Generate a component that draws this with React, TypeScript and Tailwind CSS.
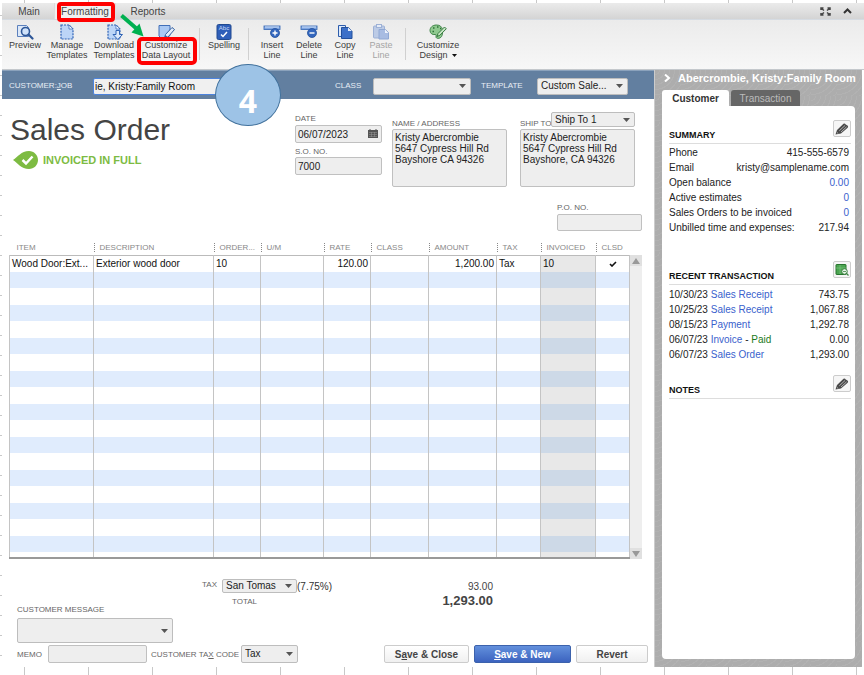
import { useState } from 'react'
import type { ReactNode } from 'react'
import clsx from 'clsx'

const columns = [
  { name: 'ITEM', width: 'w-[84px]' },
  { name: 'DESCRIPTION', width: '' },
  { name: 'ORDER...', width: 'w-[47px]' },
  { name: 'U/M', width: 'w-[63px]' },
  { name: 'RATE', width: 'w-[47px]' },
  { name: 'CLASS', width: 'w-[58px]' },
  { name: 'AMOUNT', width: 'w-[68px]' },
  { name: 'TAX', width: 'w-[44px]' },
  { name: 'INVOICED', width: 'w-[55px]' },
  { name: 'CLSD', width: 'w-[34px]' },
]

const firstLine = ['Wood Door:Ext...', 'Exterior wood door', '10', '', '120.00', '', '1,200.00', 'Tax', '10', '✓']

const summary = [
  { label: 'Phone', value: '415-555-6579' },
  { label: 'Email', value: 'kristy@samplename.com' },
  { label: 'Open balance', value: '0.00', link: true },
  { label: 'Active estimates', value: '0', link: true },
  { label: 'Sales Orders to be invoiced', value: '0', link: true },
  { label: 'Unbilled time and expenses:', value: '217.94' },
]

const transactions = [
  { date: '10/30/23', type: 'Sales Receipt', amount: '743.75' },
  { date: '10/25/23', type: 'Sales Receipt', amount: '1,067.88' },
  { date: '08/15/23', type: 'Payment', amount: '1,292.78' },
  { date: '06/07/23', type: 'Invoice', amount: '0.00', paid: true },
  { date: '06/07/23', type: 'Sales Order', amount: '1,293.00' },
]

const labelClass = 'text-[8px] leading-[9px] text-[#666] whitespace-nowrap'
const fieldClass = 'block w-full rounded-[2px] border border-[#c0c0c0] bg-[#eee] px-0.5 text-[10px] text-[#222]'

function Dropdown({ id, value, className, label }: { id: string; value: string; className: string; label?: string }) {
  return (
    <div className={clsx('relative shrink-0', className)}>
      <select
        id={id}
        aria-label={label}
        className="block h-full w-full appearance-none rounded-[2px] border border-[#bdbdbd] bg-[#eee] pl-[3px] text-[10px] leading-3 text-[#222]"
      >
        <option>{value}</option>
      </select>
      <svg className="pointer-events-none absolute inset-y-0 right-[5px] my-auto" width="7" height="4" viewBox="0 0 7 4">
        <path d="M0 0h7L3.5 4z" fill="#555" />
      </svg>
    </div>
  )
}

function PreviewIcon() {
  return (
    <svg width="18" height="16" viewBox="0 0 18 16">
      <path d="M1.5 1.5h9l2 2v9h-11z" fill="#dce8f8" stroke="#5b80bd" />
      <circle cx="9.5" cy="7.5" r="4" fill="#cfe2fa" stroke="#2d5697" strokeWidth="1.6" />
      <path d="M12.5 10.5l4 4" stroke="#2d5697" strokeWidth="2.2" strokeLinecap="round" />
    </svg>
  )
}

function TemplateIcon({ download }: { download?: boolean }) {
  return (
    <svg width="18" height="16" viewBox="0 0 18 16">
      <path d="M3 1h8l4 4v10H3z" fill="#bcd5f7" />
      <path d="M3 1h8l4 4v10H3z" fill="none" stroke="#2f63b5" strokeWidth="1.2" strokeDasharray="2 1" />
      <path d="M11 1v4h4z" fill="#f3f8ff" stroke="#2f63b5" strokeWidth=".7" />
      {download && <path d="M11 6.5h3.500v4h3l-4.700 5-4.800-5h3z" fill="#dbe8fb" stroke="#2f63b5" />}
    </svg>
  )
}

function LayoutIcon() {
  return (
    <svg width="18" height="16" viewBox="0 0 18 16">
      <path d="M2 1.5h11v10l-3 2.500H4l-2-2z" fill="#a9c8f3" stroke="#416fb8" />
      <path d="M7.500 14l1-3.500 6.500-7 2.500 2-6.500 7.500z" fill="#e3edfa" stroke="#345f9f" />
      <path d="M7.500 14l1-3 2 2z" fill="#345f9f" />
    </svg>
  )
}

function SpellingIcon() {
  return (
    <svg width="16" height="16" viewBox="0 0 16 16">
      <rect x="1" y=".5" width="14" height="15" rx="1.5" fill="#2f5fb9" stroke="#21498f" />
      <text x="8" y="6" fontSize="6" textAnchor="middle" fill="#c9dbf8" fontFamily="Liberation Sans, sans-serif">
        Abc
      </text>
      <path d="M5 10.5l2 2 4-4.500" fill="none" stroke="#fff" strokeWidth="1.5" />
    </svg>
  )
}

function LineIcon({ minus }: { minus?: boolean }) {
  return (
    <svg width="18" height="16" viewBox="0 0 18 16">
      <rect x="1" y="2" width="16" height="3.5" fill="#7fa6e2" stroke="#416fb8" strokeWidth=".9" />
      <path d="M2 3h14" stroke="#dbe8fa" strokeWidth=".9" />
      <circle cx="12" cy="9" r="4.5" fill="#3467be" stroke="#23509c" strokeWidth=".8" />
      <path d={minus ? 'M9.500 9h5' : 'M9.500 9h5M12 6.500v5'} stroke="#fff" strokeWidth="1.4" />
    </svg>
  )
}

function CopyIcon() {
  return (
    <svg width="16" height="16" viewBox="0 0 16 16">
      <path d="M1.5 1.5h7v11h-7z" fill="#dce9fb" stroke="#2c5cac" />
      <path d="M4.500 3.500h7l3.500 3.500v7.500H4.500z" fill="#3c70c8" stroke="#23509c" />
      <path d="M11 3.500v3.500h4z" fill="#e4eefc" />
    </svg>
  )
}

function PasteIcon() {
  return (
    <svg width="18" height="16" viewBox="0 0 18 16">
      <rect x="1.5" y="2" width="11" height="12" rx="1" fill="#bccbe6" stroke="#9db1d6" />
      <rect x="4.5" y=".5" width="5" height="3" fill="#e6ecf7" stroke="#9db1d6" />
      <path d="M7 5.500h6.500l3 3v6.500H7z" fill="#a8bce2" stroke="#90a8d4" />
      <path d="M13 5.500v3.500h3.500z" fill="#eef3fb" />
    </svg>
  )
}

function DesignIcon() {
  return (
    <svg width="18" height="16" viewBox="0 0 18 16">
      <path d="M7.500 1C3.500 1 1 3.500 1 6.500S3.500 11 6 10.500c1.500-.3 1 1.500 1 2.500 0 2 5 2 6-1.500S14.500 1 7.500 1z" fill="#8fc98f" stroke="#3f8448" />
      <path d="M4 4h1.500M8 3h1.500M3.500 7.500H5M11 4.500h1" stroke="#2f7139" strokeWidth="1.5" />
      <path d="M8 12.500l1-3L15.500 3l1.800 1.800-6.500 6.500z" fill="#c6e6c3" stroke="#36793f" />
    </svg>
  )
}

function PencilIcon() {
  return (
    <svg width="14" height="12" viewBox="0 0 14 12">
      <path d="M.5 11.500l1.500-4.500L8.500.8q1.400-.6 2.200.6l1.800 1.200q1.200 1 .2 2.200L6 10.500z" fill="#4a4a4a" />
      <path d="M4.300 7.800l5.700-5.300M6 9l5.600-5.200" stroke="#d8d8d8" strokeWidth=".7" />
      <path d="M2 9.500l1.300 1" stroke="#eee" strokeWidth=".6" />
    </svg>
  )
}

function ReportIcon() {
  return (
    <svg width="14" height="12" viewBox="0 0 14 12">
      <rect x="1" y=".5" width="10" height="10" rx=".5" fill="#4ba551" stroke="#28742f" />
      <path d="M1 4h10M5 1v9" stroke="#84c788" strokeWidth=".6" />
      <circle cx="9.500" cy="7.500" r="2.8" fill="#e5f3e5" stroke="#3c8342" />
      <path d="M11 9l2.500 2.500" stroke="#3c8342" strokeWidth="1.3" />
      <path d="M8 7.500h3" stroke="#3c8342" strokeWidth=".8" />
    </svg>
  )
}

function ToolButton({ icon, lines, className, children }: { icon: ReactNode; lines: ReactNode[]; className: string; children?: ReactNode }) {
  return (
    <button
      type="button"
      className={clsx('relative flex shrink-0 flex-col items-center pt-1 text-[9px] leading-[10px] whitespace-nowrap', className)}
    >
      {icon}
      {lines.map((line, i) => (
        <span key={i}>{line}</span>
      ))}
      {children}
    </button>
  )
}

function Separator({ className }: { className?: string }) {
  return <div className={clsx('mt-2 h-8 w-px shrink-0 bg-[#d0d0d0]', className)} />
}

function DesignLabel() {
  return (
    <span className="flex items-center gap-1">
      Design
      <svg width="5" height="3" viewBox="0 0 5 3">
        <path d="M0 0h5L2.500 3z" fill="#111" />
      </svg>
    </span>
  )
}

function Toolbar() {
  return (
    <div className="flex h-[50px] border-b border-[#c4c8cc] bg-linear-to-b from-[#ebebeb] to-[#f7f7f7] pl-[3px] text-[#3c3c3c]">
      <ToolButton icon={<PreviewIcon />} lines={['Preview']} className="w-10" />
      <ToolButton icon={<TemplateIcon />} lines={['Manage', 'Templates']} className="w-11" />
      <ToolButton icon={<TemplateIcon download />} lines={['Download', 'Templates']} className="w-[50px]" />
      <ToolButton icon={<LayoutIcon />} lines={['Customize', 'Data Layout']} className="w-[54px]">
        <span className="absolute top-[17px] -left-0.5 h-[28px] w-[60px] rounded-[5px] border-4 border-[#f00]" />
        <svg className="absolute -top-[7px] -left-5" width="28" height="26" viewBox="0 0 28 26">
          <path d="M2.500 2.500L18 16" stroke="#00b050" strokeWidth="4" />
          <path d="M24.500 23.500L12.500 19.500 20.500 10.500z" fill="#00b050" />
        </svg>
      </ToolButton>
      <Separator className="ml-1.5" />
      <ToolButton icon={<SpellingIcon />} lines={['Spelling']} className="w-12" />
      <Separator />
      <ToolButton icon={<LineIcon />} lines={['Insert', 'Line']} className="ml-1 w-[38px]" />
      <ToolButton icon={<LineIcon minus />} lines={['Delete', 'Line']} className="w-9" />
      <ToolButton icon={<CopyIcon />} lines={['Copy', 'Line']} className="w-9" />
      <ToolButton icon={<PasteIcon />} lines={['Paste', 'Line']} className="w-9 text-[#a5a5a5]" />
      <Separator className="ml-1.5" />
      <ToolButton icon={<DesignIcon />} lines={['Customize', <DesignLabel />]} className="w-16" />
    </div>
  )
}

function TabBar() {
  return (
    <div className="flex h-[17px] items-stretch border-b border-[#d5dbe2] bg-linear-to-b from-[#ebebeb] to-[#d4d4d4] text-[10px] text-[#444]">
      <button type="button" className="w-[52px] pl-0.5">Main</button>
      <button type="button" className="relative w-[62px] border-x border-[#ddd] bg-[#f0f0f0]">
        Formatting
        <span className="absolute -top-px left-0.5 z-10 h-5 w-[58px] rounded-[4px] border-4 border-[#f00]" />
      </button>
      <button type="button" className="w-16">Reports</button>
      <div className="ml-auto flex items-center gap-3 pr-3">
        <button type="button" aria-label="Full screen">
          <svg width="11" height="9" viewBox="0 0 11 9" fill="none" stroke="#444" strokeWidth="1.5">
            <path d="M1 3V1h2.500M7.500 1H10v2M10 6v2H7.500M3.500 8H1V6M1.500 1.500l2.500 2M9.500 1.500L7 3.500M1.500 7.500L4 5.500M9.500 7.500L7 5.500" />
          </svg>
        </button>
        <button type="button" aria-label="Collapse">
          <svg width="9" height="6" viewBox="0 0 9 6" fill="none" stroke="#333" strokeWidth="2">
            <path d="M1 5l3.500-3.500L8 5" />
          </svg>
        </button>
      </div>
    </div>
  )
}

function JobBar() {
  const [job, setJob] = useState('ie, Kristy:Family Room')
  const barLabel = 'shrink-0 text-[8px] text-[#e8eef5]'
  return (
    <div className="flex h-[29px] items-center border-t border-[#8ba2bc] bg-[#627fa0] pt-0.5 pl-[7px]">
      <label htmlFor="job" className={clsx(barLabel, 'w-[84px]')}>
        CUSTOMER:<u>J</u>OB
      </label>
      <input
        id="job"
        value={job}
        onChange={(e) => setJob(e.target.value)}
        className="h-[17px] w-[170px] rounded-[2px] border border-[#4c83dd] bg-[#f0f0f0] px-px text-[10px] text-[#111]"
      />
      <label htmlFor="class" className={clsx(barLabel, 'ml-[72px] w-[38px]')}>CLASS</label>
      <Dropdown id="class" value="" className="h-[17px] w-[98px]" />
      <label htmlFor="template" className={clsx(barLabel, 'ml-2.5 w-14')}>TEMPLATE</label>
      <Dropdown id="template" value="Custom Sale..." className="h-[17px] w-[91px]" />
    </div>
  )
}

function OrderHeader() {
  return (
    <div className="flex items-start pt-[13px] pr-[19px] pl-2">
      <div className="flex-1">
        <h1 className="text-[30px] leading-9 whitespace-nowrap text-[#444]">Sales Order</h1>
        <div className="mt-[3px] flex items-center gap-[5px] pl-[3px]">
          <svg width="25" height="18" viewBox="0 0 25 18">
            <path d="M0 9C5 6 8 0 16 0c5 0 9 4 9 9s-4 9-9 9C8 18 5 12 0 9z" fill="#7dbb42" />
            <path d="M9.500 9l3.500 3.500 6.500-7" fill="none" stroke="#fff" strokeWidth="2.5" />
          </svg>
          <span className="text-[11px] font-bold whitespace-nowrap text-[#7dbb42]">INVOICED IN FULL</span>
        </div>
      </div>
      <div className="mr-2.5 w-[87px] pt-0.5">
        <label htmlFor="date" className={clsx(labelClass, 'mb-[2px] block')}>DATE</label>
        <div className="relative">
          <input id="date" defaultValue="06/07/2023" className={clsx(fieldClass, 'h-[18px]')} />
          <svg className="absolute top-1 right-1" width="10" height="9" viewBox="0 0 10 9">
            <path d="M0 1h10v8H0z" fill="#555" />
            <path d="M2 0v2M8 0v2" stroke="#555" />
            <path d="M1 3.500h8M1 5.500h8M1 7.500h8M3.500 3v5M6.500 3v5" stroke="#999" strokeWidth=".5" />
          </svg>
        </div>
        <label htmlFor="so" className={clsx(labelClass, 'mt-1 mb-px block')}>S.O. NO.</label>
        <input id="so" defaultValue="7000" className={clsx(fieldClass, 'h-[18px]')} />
      </div>
      <div className="mr-[13px] w-[115px] pt-[7px]">
        <label htmlFor="address" className={clsx(labelClass, 'mb-px block')}>NAME / ADDRESS</label>
        <textarea
          id="address"
          defaultValue={'Kristy Abercrombie\n5647 Cypress Hill Rd\nBayshore CA 94326'}
          className={clsx(fieldClass, 'h-[58px] resize-none pt-0.5 leading-[11px]')}
        />
      </div>
      <div className="w-[115px]">
        <div className="flex h-[17px] items-start">
          <label htmlFor="ship" className={clsx(labelClass, 'w-[31px] pt-[7px]')}>SHIP TO</label>
          <Dropdown id="shipto" label="Ship to address" value="Ship To 1" className="h-[15px] w-[84px]" />
        </div>
        <textarea
          id="ship"
          defaultValue={'Kristy Abercrombie\n5647 Cypress Hill Rd\nBayshore, CA 94326'}
          className={clsx(fieldClass, 'h-[58px] resize-none pt-0.5 leading-[11px]')}
        />
      </div>
    </div>
  )
}

function Cell({ text, index }: { text: string; index: number }) {
  if (text === '✓') {
    return (
      <svg className="mx-auto" width="8" height="6" viewBox="0 0 8 6" role="img" aria-label="Closed">
        <path d="M1 3l2 2 4-4" fill="none" stroke="#111" strokeWidth="1.6" />
      </svg>
    )
  }
  return <div className={clsx('px-0.5', (index === 4 || index === 6) && 'text-right')}>{text}</div>
}

function LineItems() {
  // 18 full rows, the last partial one is the spare row below
  const rows = Array.from({ length: 18 }, (_, i) => (i === 0 ? firstLine : columns.map(() => '')))
  return (
    <div className="mr-3 ml-[7px] flex items-end">
      <table className="flex-1 table-fixed border-collapse text-[10px] leading-3 text-[#111]">
        <thead>
          <tr className="h-[14px] text-left text-[8px] leading-[9px] text-[#888]">
            {columns.map((col, i) => (
              <th key={col.name} className={clsx('p-0 font-normal whitespace-nowrap', col.width)}>
                <div className={clsx('h-[9px]', i === 0 ? 'pl-[7px]' : 'border-l border-dotted border-[#888] pl-[5px]')}>{col.name}</div>
              </th>
            ))}
          </tr>
        </thead>
        <tbody className="border-t border-b-2 border-t-[#bbb] border-b-[#999]">
          {rows.map((row, r) => (
            <tr key={r} className={r % 2 ? 'h-4 bg-[#e0ecfd]' : 'h-[17px]'}>
              {row.map((text, i) => (
                <td
                  key={i}
                  className={clsx(
                    'overflow-hidden border-x border-[#c4c4c4] p-0 whitespace-nowrap',
                    i === 8 && (r % 2 ? 'bg-[#cdd9e7]' : 'bg-[#e8e8e8]'),
                  )}
                >
                  <Cell text={text} index={i} />
                </td>
              ))}
            </tr>
          ))}
          <tr className="h-1.5">
            {columns.map((col, i) => (
              <td key={col.name} className={clsx('border-x border-[#c4c4c4] p-0', i === 8 && 'bg-[#e8e8e8]')} />
            ))}
          </tr>
        </tbody>
      </table>
      <div className="flex w-3 flex-col justify-between self-stretch pt-[14px]">
        <div className="flex flex-1 flex-col justify-between bg-[#eee]">
          <button type="button" aria-label="Scroll up" className="flex h-[11px] items-center justify-center bg-[#e0e0e0]">
            <svg width="8" height="6" viewBox="0 0 8 6"><path d="M0 6l4-6 4 6z" fill="#999" /></svg>
          </button>
          <button type="button" aria-label="Scroll down" className="flex h-[11px] items-center justify-center bg-[#e0e0e0]">
            <svg width="8" height="6" viewBox="0 0 8 6"><path d="M0 0l4 6 4-6z" fill="#999" /></svg>
          </button>
        </div>
      </div>
    </div>
  )
}

function OrderFooter() {
  const plain = 'h-[18px] rounded-[2px] border border-[#ccc] bg-linear-to-b from-white to-[#f0f0f0] text-[10px] font-bold text-[#444]'
  return (
    <div className="pr-1.5 pl-[15px]">
      <div className="flex items-start">
        <div className="w-[156px] pt-[46px]">
          <label htmlFor="message" className={clsx(labelClass, 'block')}>CUSTOMER MESSAGE</label>
          <Dropdown id="message" value="" className="mt-1 h-[25px]" />
        </div>
        <div className="ml-[29px] w-[291px] pt-[19px]">
          <div className="flex h-4 items-center">
            <label htmlFor="tax" className={clsx(labelClass, 'w-5 pb-1')}>TAX</label>
            <Dropdown id="tax" value="San Tomas" className="h-[14px] w-[75px]" />
            <span className="text-[10px] text-[#333]">(7.75%)</span>
            <span className="ml-auto text-[10px] text-[#444]">93.00</span>
          </div>
          <div className="flex h-[14px] items-center justify-between pl-[30px]">
            <span className={labelClass}>TOTAL</span>
            <span className="text-[13px] leading-[14px] font-bold text-[#444]">1,293.00</span>
          </div>
        </div>
      </div>
      <div className="mt-0.5 flex items-center">
        <label htmlFor="memo" className={clsx(labelClass, 'w-[31px]')}>MEMO</label>
        <input id="memo" className="h-[18px] w-[99px] rounded-[2px] border border-[#c0c0c0] bg-[#eee] px-0.5 text-[10px]" />
        <label htmlFor="taxcode" className={clsx(labelClass, 'ml-1 w-[90px]')}>
          CUSTOMER TA<u>X</u> CODE
        </label>
        <Dropdown id="taxcode" value="Tax" className="h-[18px] w-[57px]" />
        <div className="ml-auto flex gap-[5px]">
          <button type="button" className={clsx(plain, 'w-[85px]')}>
            S<u>a</u>ve &amp; Close
          </button>
          <button
            type="button"
            className="h-[18px] w-[97px] rounded-[2px] border border-[#3c62ac] bg-linear-to-b from-[#6390dc] to-[#3c63bf] text-[10px] font-bold text-white"
          >
            <u>S</u>ave &amp; New
          </button>
          <button type="button" className={clsx(plain, 'w-[72px]')}>Revert</button>
        </div>
      </div>
    </div>
  )
}

function SectionTitle({ title, icon, action }: { title: string; icon: ReactNode; action: string }) {
  return (
    <div className="flex h-6 items-end justify-between border-b border-[#ddd]">
      <h2 className="pb-[3px] text-[9px] leading-[10px] font-bold text-[#111]">{title}</h2>
      <button
        type="button"
        aria-label={action}
        className="mb-1.5 flex h-[17px] w-[18px] items-center justify-center rounded-[2px] border border-[#ccc] bg-[#f6f6f6]"
      >
        {icon}
      </button>
    </div>
  )
}

function CustomerPanel() {
  return (
    <aside className="flex w-[208px] shrink-0 flex-col border-l border-[#ccc] bg-[#adadad] bg-[repeating-radial-gradient(circle_at_0_0,#adadad_0_4px,#b2b2b2_4px_5px)] bg-[length:26px_26px] pr-[7px] pb-2 pl-[7px]">
      <div className="flex h-5 items-center gap-[7px] pb-1 pl-0.5 whitespace-nowrap text-white">
        <svg className="shrink-0" width="7" height="8" viewBox="0 0 7 8">
          <path d="M1 .5L5 4 1 7.500" fill="none" stroke="#fff" strokeWidth="2" />
        </svg>
        <span className="text-[11px] leading-3 font-bold">Abercrombie, Kristy:Family Room</span>
      </div>
      <div className="flex h-4 items-stretch gap-0.5 text-[10px] font-bold">
        <button type="button" className="w-[67px] rounded-t-[3px] bg-white text-[#333]">Customer</button>
        <button type="button" className="w-[69px] rounded-t-[3px] bg-[#666] font-normal text-[#bbb]">Transaction</button>
      </div>
      <div className="flex-1 rounded-[4px] rounded-tl-none bg-white pt-[14px] pr-1 pl-[7px] text-[10px] leading-[15px] text-[#222]">
        <SectionTitle title="SUMMARY" icon={<PencilIcon />} action="Edit summary" />
        <dl className="pt-px pr-0.5">
          {summary.map((item) => (
            <div key={item.label} className="flex justify-between whitespace-nowrap">
              <dt>{item.label}</dt>
              <dd>{item.link ? <a href="#" className="text-[#3a5fcd]">{item.value}</a> : item.value}</dd>
            </div>
          ))}
        </dl>
        <div className="pt-[26px]">
          <SectionTitle title="RECENT TRANSACTION" icon={<ReportIcon />} action="Open report" />
        </div>
        <ul className="pt-0.5 pr-0.5">
          {transactions.map((t) => (
            <li key={t.date + t.amount} className="flex justify-between whitespace-nowrap">
              <span>
                {t.date} <a href="#" className="text-[#3a5fcd]">{t.type}</a>
                {t.paid && <> - <span className="text-[#1a7a1a]">Paid</span></>}
              </span>
              <span>{t.amount}</span>
            </li>
          ))}
        </ul>
        <div className="pt-[13px]">
          <SectionTitle title="NOTES" icon={<PencilIcon />} action="Edit notes" />
        </div>
      </div>
    </aside>
  )
}

export default function App() {
  return (
    <div className="relative flex min-h-screen flex-col bg-white font-['Liberation_Sans',Arial,sans-serif]">
      {/* sheet gridlines show round the edges of the window */}
      <div className="h-[3px] bg-[linear-gradient(90deg,#c8c8c8_1px,transparent_1px)] bg-[length:64px_100%] bg-[position:24px_0]" />
      <div className="flex bg-[linear-gradient(180deg,#c8c8c8_1px,transparent_1px)] bg-[length:100%_20px] bg-[position:0_12px] pl-0.5">
        <div className="min-w-0 flex-1 bg-white">
          <TabBar />
          <Toolbar />
          <div className="flex pr-0.5">
            <main className="min-w-0 flex-1 pb-1">
              <JobBar />
              <OrderHeader />
              <div className="mt-4 mr-3 mb-2.5 ml-auto w-[85px]">
                <label htmlFor="po" className={clsx(labelClass, 'mb-[2px] block')}>P.O. NO.</label>
                <input id="po" className={clsx(fieldClass, 'h-[17px]')} />
              </div>
              <LineItems />
              <OrderFooter />
            </main>
            <CustomerPanel />
          </div>
        </div>
      </div>
      <div className="min-h-[7px] flex-1 bg-[linear-gradient(90deg,#c8c8c8_1px,transparent_1px)] bg-[length:64px_100%] bg-[position:24px_0]" />
      <div className="absolute top-16 left-[215px] flex h-[62px] w-[66px] items-center justify-center rounded-[50%] border border-[#41719c] bg-[#9dc3e6] pt-3 font-['Open_Sans',sans-serif] text-[32px] font-bold text-white">
        4
      </div>
    </div>
  )
}
